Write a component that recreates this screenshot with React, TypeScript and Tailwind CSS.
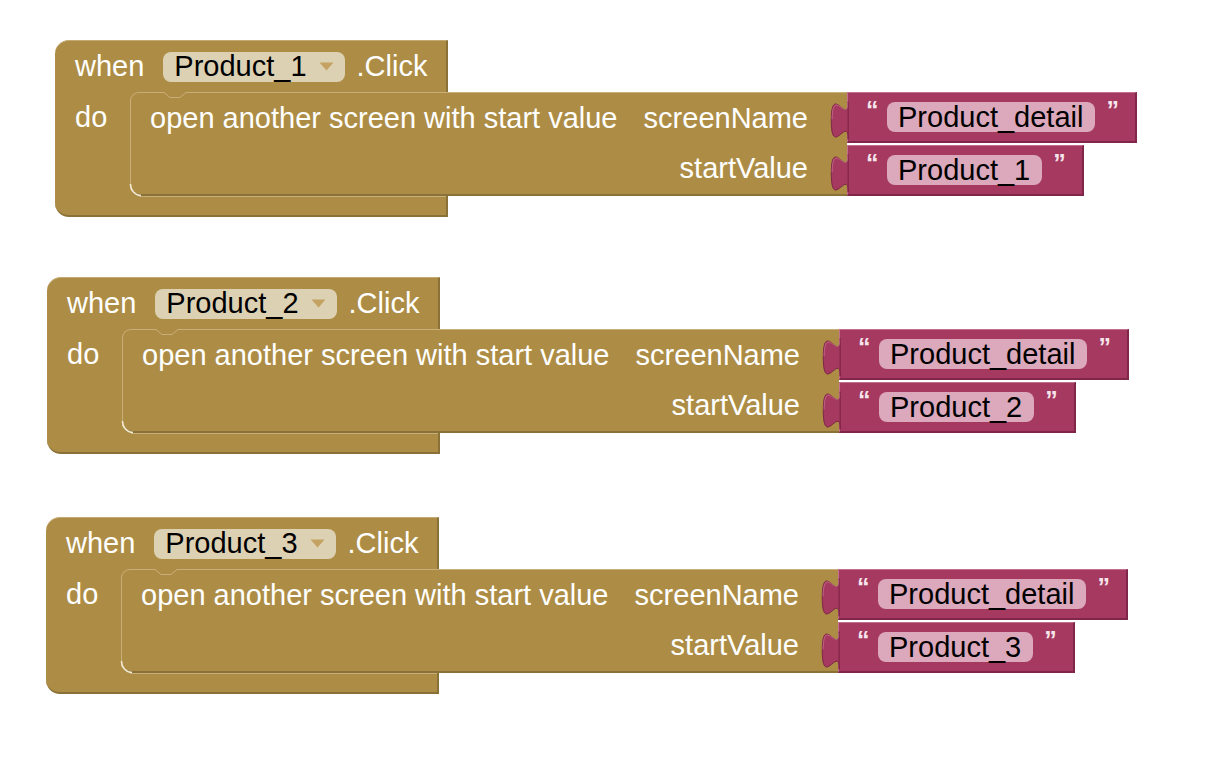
const blocks = [
  { left: 'left-[55px]', top: 'top-[40px]', button: 'Product_1' },
  { left: 'left-[47px]', top: 'top-[277px]', button: 'Product_2' },
  { left: 'left-[46px]', top: 'top-[517px]', button: 'Product_3' },
];

const font = "font-['Liberation_Sans',Arial,sans-serif] text-[29px] leading-none";
const quote = "w-[8px] -mt-[13px] text-[#f6e6ec] font-bold text-[25px] leading-none font-['Liberation_Sans',Arial,sans-serif]";

function Tab() {
  return (
    <svg
      className="absolute left-[-18px] top-[8px]"
      width="19"
      height="39"
      viewBox="-8.6 -0.3 9 15.6"
      preserveAspectRatio="none"
    >
      <path d="M0,0 c0,10 -8,-8 -8,7.5 s8,-2.5 8,7.5 z" fill="#a5395f" stroke="#7a2243" strokeWidth="0.4" />
      <path d="M-0.2,0.4 c0,8.5 -7.2,-6.6 -7.4,6.6" fill="none" stroke="#c7718f" strokeWidth="0.35" />
    </svg>
  );
}

function TextBlock({ value }: { value: string }) {
  return (
    <div className="relative h-[51px] flex items-center self-start pl-[18px] pr-[21px] bg-[#a5395f] border-t border-l border-t-[#c36f8e] border-l-[#c36f8e] border-b-2 border-r-2 border-b-[#80264a] border-r-[#80264a]">
      <Tab />
      <span className={`${quote} mr-[13px]`}>“</span>
      <span className={`${font} h-[30px] flex items-center pl-[11px] pr-[12px] rounded-[8px] bg-[#dba8bc] text-black`}>{value}</span>
      <span className={`${quote} ml-[11px]`}>”</span>
    </div>
  );
}

function EventBlock({ left, top, button }: { left: string; top: string; button: string }) {
  return (
    <div className={`absolute ${left} ${top} flex flex-col text-white`}>
      {/* when ... .Click */}
      <div className={`${font} w-[393px] h-[52px] flex items-center pl-[20px] bg-[#ad8d45] rounded-tl-[14px] border-t border-t-[#c4aa72] border-r-2 border-r-[#8a7137]`}>
        <span>when</span>
        <span className="ml-[19px] h-[30px] flex items-center pl-[11px] pr-[11px] rounded-[8px] bg-[#ddd1b3] text-black">
          {button}
          <svg className="ml-[12px]" width="15" height="9" viewBox="0 0 15 9">
            <path d="M0.5,0.5 L14.5,0.5 L7.5,8.5 z" fill="#c3a262" />
          </svg>
        </span>
        <span className="ml-[12px]">.Click</span>
      </div>

      {/* do + statement */}
      <div className="flex">
        <div className={`${font} w-[75px] bg-[#ad8d45] pl-[20px]`}>
          <div className="h-[51px] flex items-center">do</div>
        </div>
        <div className="flex">
          <div className="bg-[#ad8d45]">
            <div className="relative w-[717px] h-[104px] flex flex-col bg-[#ad8d45] rounded-tl-[9px] rounded-bl-[10px] border-t border-l border-t-[#c8ae78] border-l-[#c8ae78] border-b-2 border-b-[#8a7137]">
              <svg className="absolute left-[27px] top-[-1px]" width="34" height="8" viewBox="0 0 34 8">
                <path d="M0,0 L6,0 L12,5 L22,5 L28,0 L34,0 L34,-2 L0,-2 z" fill="#ad8d45" />
                <polyline points="0,0.5 6,0.5 12,5.5 22,5.5 28,0.5 34,0.5" fill="none" stroke="#c8ae78" strokeWidth="1" />
              </svg>
              <svg className="absolute left-[-2px] bottom-[-4px]" width="14" height="14" viewBox="0 0 14 14">
                <path d="M1.5,0 A 11 11 0 0 0 12 11.5" fill="none" stroke="#f3ead6" strokeWidth="1.6" />
              </svg>
              <div className={`${font} h-[51px] flex items-center justify-between pl-[19px] pr-[39px]`}>
                <span>open another screen with start value</span>
                <span>screenName</span>
              </div>
              <div className={`${font} h-[51px] flex items-center justify-end pr-[39px]`}>
                <span>startValue</span>
              </div>
            </div>
          </div>
          <div className="flex flex-col gap-[2px]">
            <TextBlock value="Product_detail" />
            <TextBlock value={button} />
          </div>
        </div>
      </div>

      {/* bottom of the C */}
      <div className="w-[393px] h-[21px] bg-[#ad8d45] rounded-bl-[14px] border-r-2 border-b-2 border-r-[#8a7137] border-b-[#8a7137]">
        <div className="ml-[84px] h-px bg-[#c8ae78]" />
      </div>
    </div>
  );
}

export default function App() {
  return (
    <div className="relative w-[1220px] h-[758px] bg-white overflow-hidden">
      {blocks.map((b) => (
        <EventBlock key={b.button} {...b} />
      ))}
    </div>
  );
}
